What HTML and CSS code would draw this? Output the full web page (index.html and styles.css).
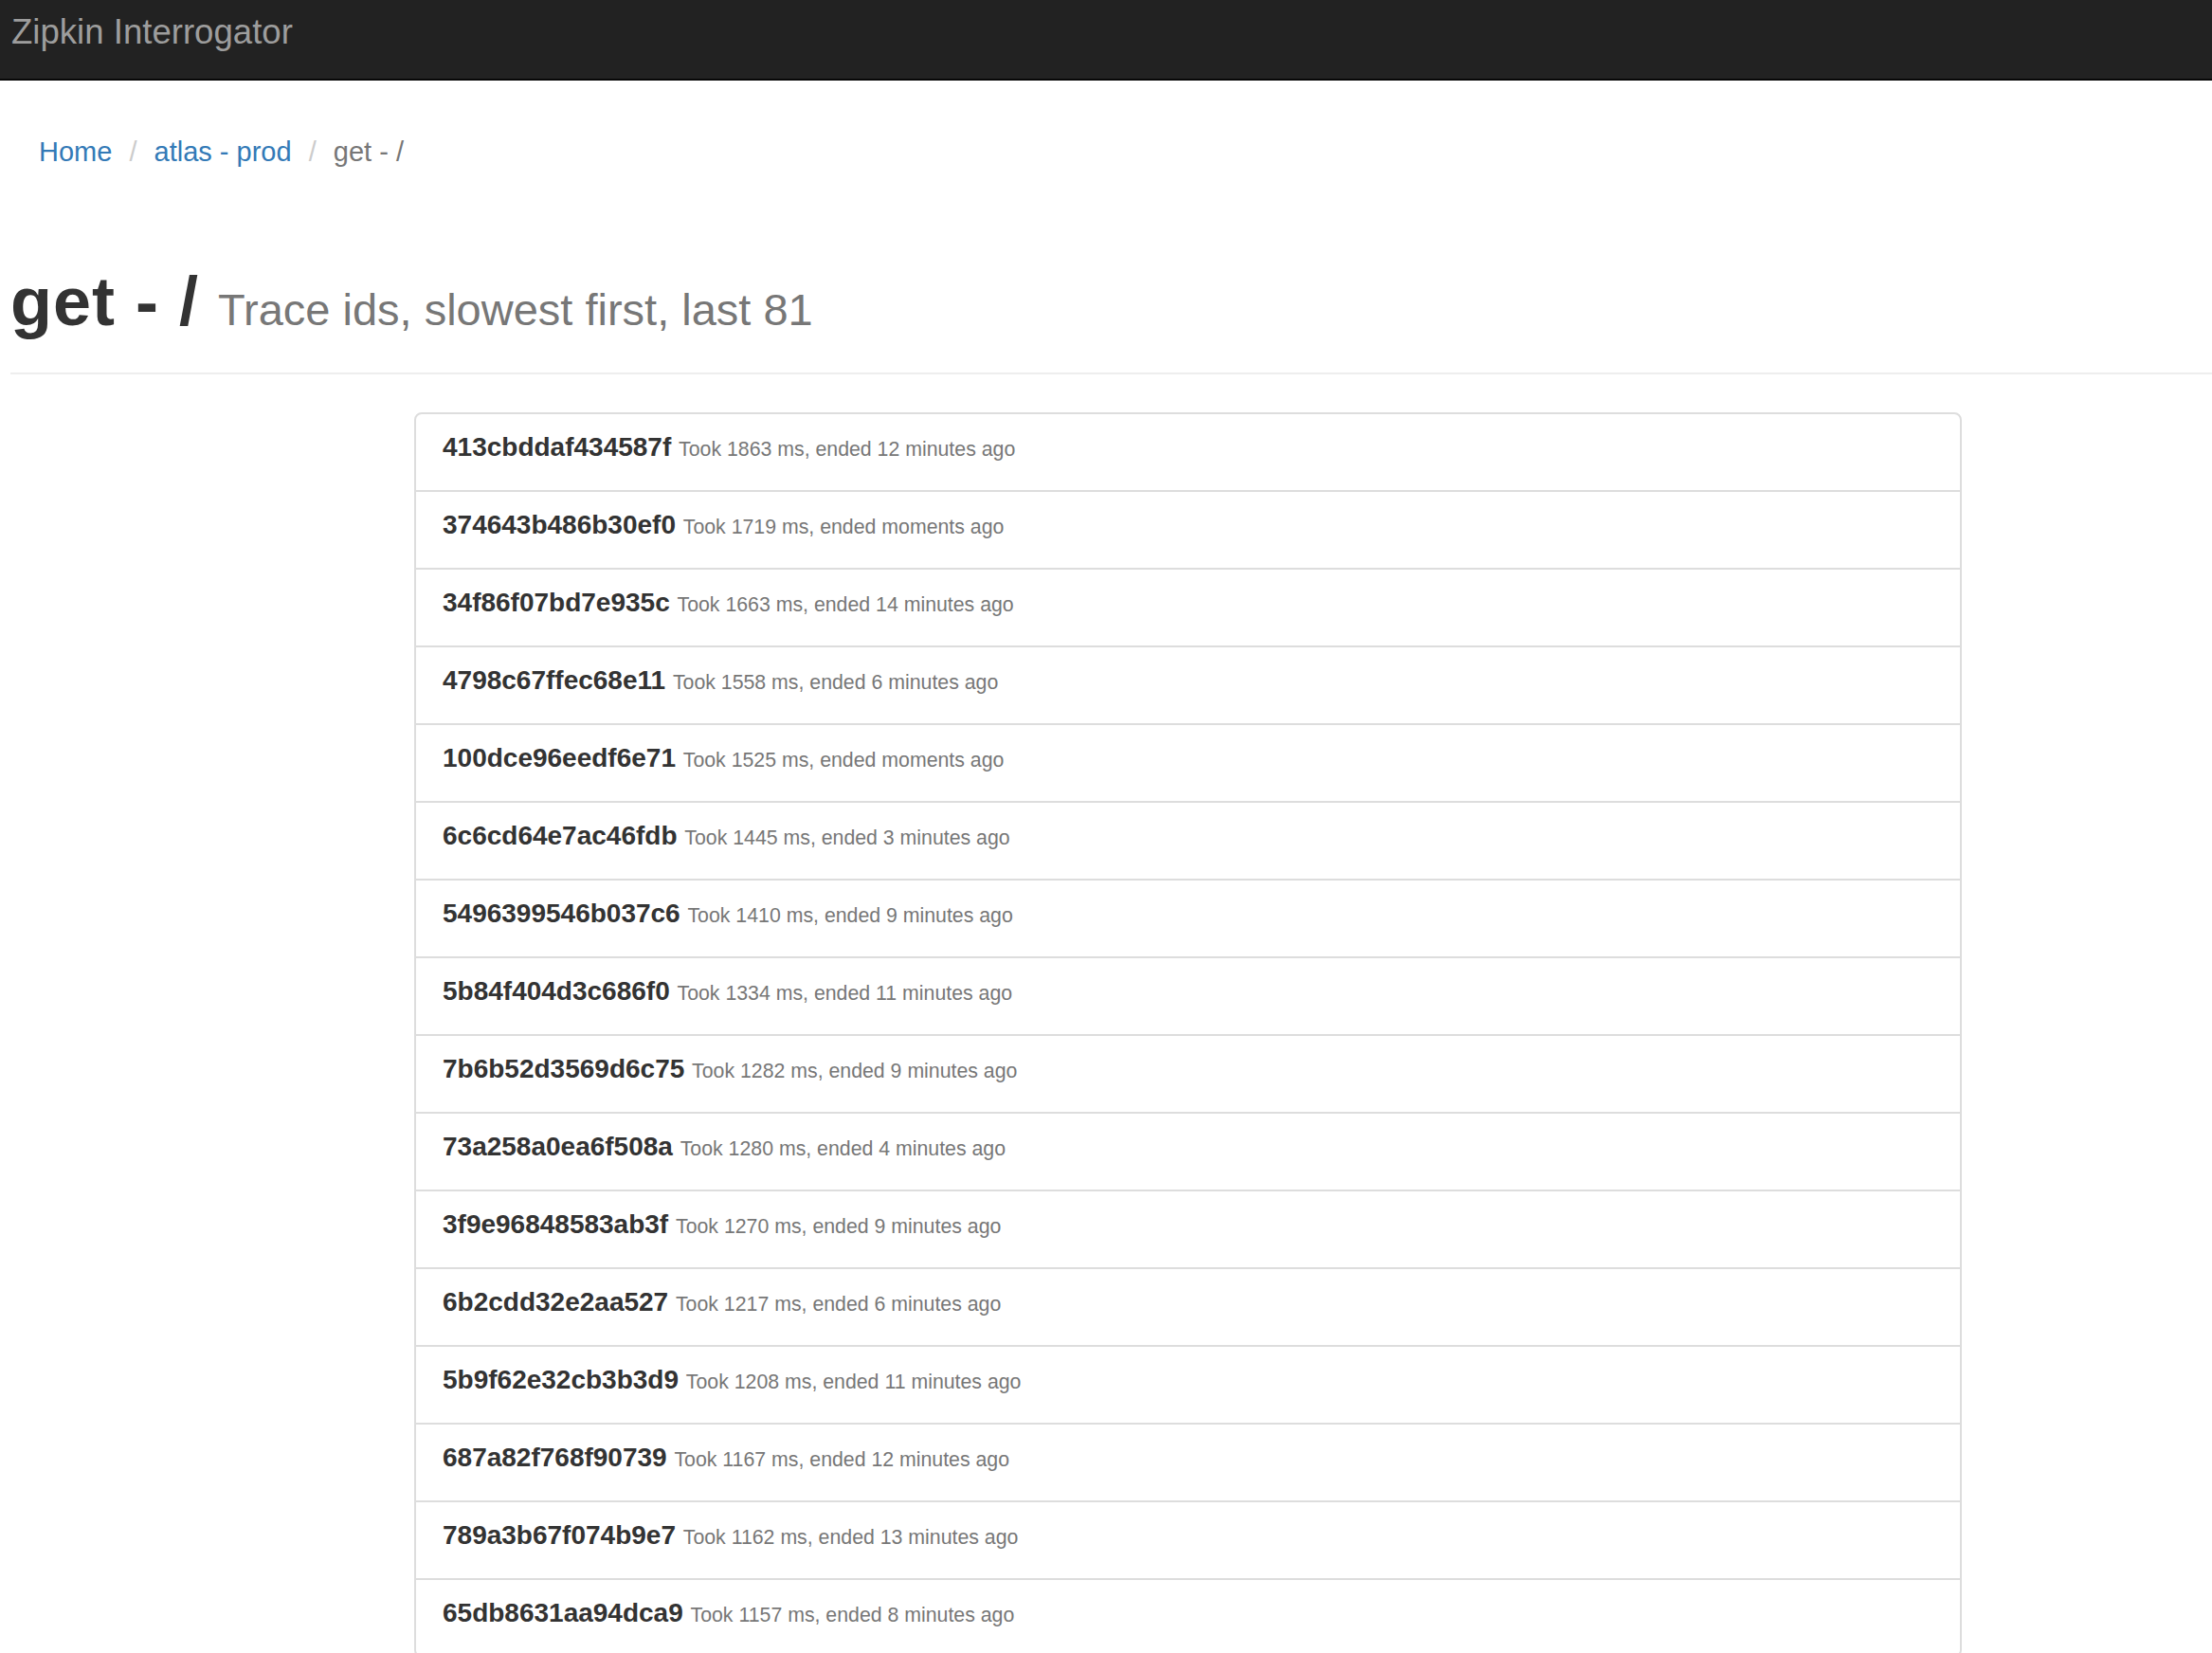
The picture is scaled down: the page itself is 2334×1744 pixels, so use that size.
FILE: index.html
```html
<!DOCTYPE html>
<html>
<head>
<meta charset="utf-8">
<title>Zipkin Interrogator</title>
<link rel="stylesheet" href="styles.css">
</head>
<body>
<nav class="navbar">
  <span class="brand">Zipkin Interrogator</span>
</nav>
<main class="page">
  <ol class="breadcrumb">
    <li><a href="#">Home</a></li>
    <li><a href="#">atlas - prod</a></li>
    <li class="active">get - /</li>
  </ol>
  <div class="page-header">
    <h1><span class="title">get - /</span> <small>Trace ids, slowest first, last 81</small></h1>
  </div>
  <div class="list-wrap">
    <ul class="list-group">
      <li class="item"><span class="tid">413cbddaf434587f</span> <span class="meta">Took 1863 ms, ended 12 minutes ago</span></li>
      <li class="item"><span class="tid">374643b486b30ef0</span> <span class="meta">Took 1719 ms, ended moments ago</span></li>
      <li class="item"><span class="tid">34f86f07bd7e935c</span> <span class="meta">Took 1663 ms, ended 14 minutes ago</span></li>
      <li class="item"><span class="tid">4798c67ffec68e11</span> <span class="meta">Took 1558 ms, ended 6 minutes ago</span></li>
      <li class="item"><span class="tid">100dce96eedf6e71</span> <span class="meta">Took 1525 ms, ended moments ago</span></li>
      <li class="item"><span class="tid">6c6cd64e7ac46fdb</span> <span class="meta">Took 1445 ms, ended 3 minutes ago</span></li>
      <li class="item"><span class="tid">5496399546b037c6</span> <span class="meta">Took 1410 ms, ended 9 minutes ago</span></li>
      <li class="item"><span class="tid">5b84f404d3c686f0</span> <span class="meta">Took 1334 ms, ended 11 minutes ago</span></li>
      <li class="item"><span class="tid">7b6b52d3569d6c75</span> <span class="meta">Took 1282 ms, ended 9 minutes ago</span></li>
      <li class="item"><span class="tid">73a258a0ea6f508a</span> <span class="meta">Took 1280 ms, ended 4 minutes ago</span></li>
      <li class="item"><span class="tid">3f9e96848583ab3f</span> <span class="meta">Took 1270 ms, ended 9 minutes ago</span></li>
      <li class="item"><span class="tid">6b2cdd32e2aa527</span> <span class="meta">Took 1217 ms, ended 6 minutes ago</span></li>
      <li class="item"><span class="tid">5b9f62e32cb3b3d9</span> <span class="meta">Took 1208 ms, ended 11 minutes ago</span></li>
      <li class="item"><span class="tid">687a82f768f90739</span> <span class="meta">Took 1167 ms, ended 12 minutes ago</span></li>
      <li class="item"><span class="tid">789a3b67f074b9e7</span> <span class="meta">Took 1162 ms, ended 13 minutes ago</span></li>
      <li class="item"><span class="tid">65db8631aa94dca9</span> <span class="meta">Took 1157 ms, ended 8 minutes ago</span></li>
    </ul>
  </div>
</main>
</body>
</html>
```
FILE: styles.css
```css
html, body {
  margin: 0;
  padding: 0;
  background: #fff;
}
body {
  font-family: "Liberation Sans", Arial, Helvetica, sans-serif;
  font-size: 28px;
  line-height: 40px;
  color: #333;
}
.navbar {
  background: #222;
  border-bottom: 2px solid #080808;
  padding: 14px 0 0 12px;
  box-sizing: border-box;
  height: 85px;
}
.brand {
  display: block;
  font-size: 36.6px;
  line-height: 40px;
  color: #9d9d9d;
}
.page {
  padding-left: 11px;
}
.breadcrumb {
  list-style: none;
  margin: 0;
  padding: 55px 0 0 30px;
  line-height: 40px;
  font-size: 29px;
}
.breadcrumb li {
  display: inline-block;
}
.breadcrumb li + li::before {
  content: "/\00a0";
  padding: 0 10px;
  color: #ccc;
}
.breadcrumb a {
  color: #337ab7;
  text-decoration: none;
}
.breadcrumb .active {
  color: #777;
}
.page-header {
  margin-top: 98px;
  padding-bottom: 35px;
  border-bottom: 2px solid #eee;
}
.page-header h1 {
  margin: 0;
  font-size: 72px;
  line-height: 80px;
  font-weight: bold;
  color: #333;
}
.page-header .title {
  letter-spacing: 1px;
}
.page-header small {
  font-size: 47px;
  line-height: 1;
  font-weight: normal;
  color: #777;
}
.list-wrap {
  padding: 40px 0 0 426px;
}
.list-group {
  list-style: none;
  margin: 0;
  padding: 0;
  width: 1633px;
}
.item {
  border: 2px solid #ddd;
  margin-bottom: -2px;
  padding: 15px 28px 25px;
  height: 40px;
  line-height: 40px;
  background: #fff;
}
.item:first-child {
  border-radius: 8px 8px 0 0;
}
.item:last-child {
  border-radius: 0 0 8px 8px;
}
.tid {
  font-weight: bold;
  font-size: 28px;
  color: #333;
}
.meta {
  font-size: 21.3px;
  line-height: 20px;
  color: #777;
}
```
